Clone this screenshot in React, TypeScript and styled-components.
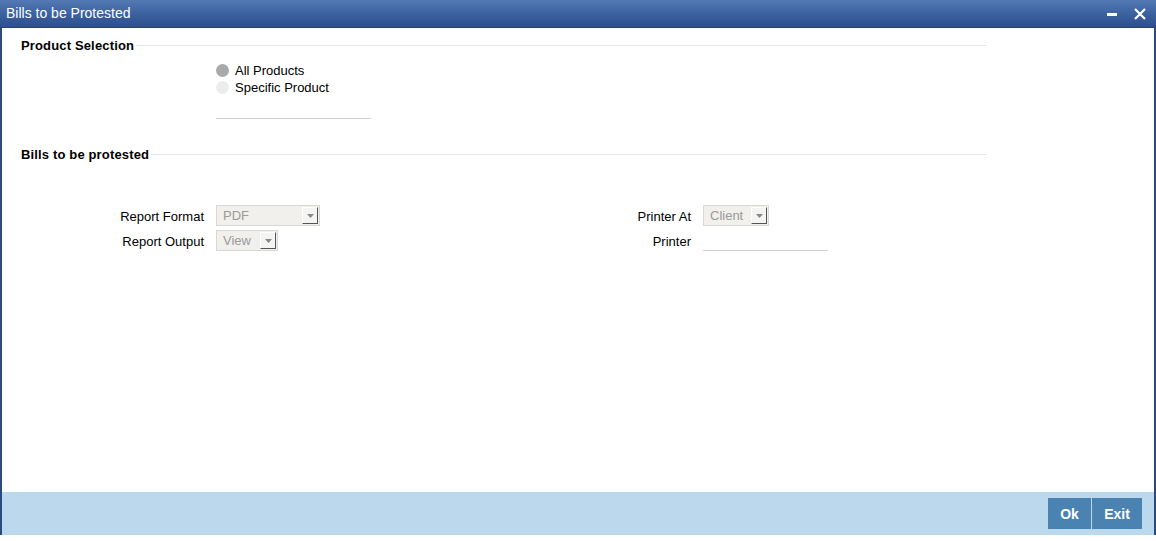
import React from "react";
import styled, { createGlobalStyle } from "styled-components";

const Global = createGlobalStyle`
  html, body { margin: 0; padding: 0; background: #fff; }
  body { font-family: "Liberation Sans", Arial, sans-serif; font-size: 13px; color: #000; }
  * { box-sizing: border-box; }
`;

const Window = styled.div`
  width: 1156px;
  height: 535px;
  display: flex;
  flex-direction: column;
  background: #fff;
`;

const TitleBar = styled.div`
  height: 28px;
  flex: none;
  display: flex;
  align-items: center;
  justify-content: space-between;
  padding: 0 10px 0 6px;
  background: linear-gradient(to bottom, #5479b3 0%, #3c62a0 50%, #2d4f8d 100%);
  border-bottom: 1px solid #25447c;
  color: #fff;
  font-size: 14px;
`;

const TitleText = styled.span`
  line-height: 28px;
  margin-top: -2px;
`;

const TitleButtons = styled.div`
  display: flex;
  align-items: center;
  gap: 16px;
`;

const IconButton = styled.span`
  width: 12px;
  height: 12px;
  display: flex;
  align-items: center;
  justify-content: center;
`;

const Body = styled.div`
  flex: 1;
  display: flex;
  flex-direction: column;
  border-left: 2px solid #2b4a80;
  border-right: 2px solid #2b4a80;
  padding: 9px 0 0 19px;
`;

const SectionHeader = styled.div<{ $mt?: number }>`
  display: flex;
  align-items: center;
  width: 966px;
  height: 16px;
  margin-top: ${(p) => p.$mt ?? 0}px;
  font-weight: bold;
  font-size: 13px;
  letter-spacing: 0.15px;
`;

const HeaderLine = styled.div`
  flex: 1;
  height: 0;
  border-top: 1px solid #e6e6e6;
  margin-left: 2px;
`;

const RadioGroup = styled.div`
  display: flex;
  flex-direction: column;
  margin: 9px 0 0 195px;
`;

const RadioRow = styled.label`
  display: flex;
  align-items: center;
  height: 17px;
  gap: 6px;
  font-size: 13px;
`;

const RadioDot = styled.span<{ $checked?: boolean }>`
  width: 13px;
  height: 13px;
  border-radius: 50%;
  background: ${(p) => (p.$checked ? "#a9a9a9" : "#ececec")};
`;

const Underline = styled.div<{ $w: number; $ml?: number; $mt?: number }>`
  width: ${(p) => p.$w}px;
  height: 0;
  border-top: 1px solid #cfcfcf;
  margin-left: ${(p) => p.$ml ?? 0}px;
  margin-top: ${(p) => p.$mt ?? 0}px;
`;

const FormGrid = styled.div`
  display: grid;
  grid-template-columns: 487px 487px;
  margin-top: 43px;
  row-gap: 4px;
`;

const Field = styled.div`
  display: grid;
  grid-template-columns: 183px auto;
  column-gap: 12px;
  align-items: center;
  height: 21px;
  justify-items: start;
`;

const Label = styled.span`
  justify-self: end;
  font-size: 13px;
  padding-top: 1px;
`;

const Select = styled.div<{ $w: number }>`
  width: ${(p) => p.$w}px;
  height: 21px;
  display: flex;
  align-items: center;
  justify-content: space-between;
  background: #f1f0ec;
  border: 1px solid #d8d8d4;
  color: #9a9a9a;
  font-size: 13px;
  padding: 0 1px 0 6px;
`;

const Arrow = styled.span`
  width: 16px;
  height: 17px;
  display: flex;
  align-items: center;
  justify-content: center;
  background: #f4f4f2;
  border-top: 1px solid #fff;
  border-left: 1px solid #fff;
  border-right: 1px solid #555;
  border-bottom: 1px solid #555;
`;

const LineInput = styled.div`
  width: 125px;
  height: 21px;
  border-bottom: 1px solid #cfcfcf;
`;

const Footer = styled.div`
  height: 43px;
  flex: none;
  display: flex;
  align-items: center;
  justify-content: flex-end;
  gap: 1px;
  padding-right: 12px;
  background: #bcd8ed;
  border-left: 2px solid #2b4a80;
  border-right: 2px solid #2b4a80;
`;

const Button = styled.button<{ $w: number }>`
  width: ${(p) => p.$w}px;
  height: 31px;
  border: none;
  background: #4a83b2;
  color: #fff;
  font-family: "Liberation Sans", Arial, sans-serif;
  font-weight: bold;
  font-size: 14px;
  padding: 0;
  cursor: pointer;
`;

const ArrowIcon = () => (
  <svg width="7" height="4" viewBox="0 0 7 4">
    <path d="M0 0h7L3.5 4z" fill="#888" />
  </svg>
);

export default function App() {
  return (
    <>
      <Global />
      <Window>
        <TitleBar>
          <TitleText>Bills to be Protested</TitleText>
          <TitleButtons>
            <IconButton>
              <svg width="11" height="12" viewBox="0 0 11 12">
                <rect x="0" y="5" width="10" height="3" fill="#fff" />
              </svg>
            </IconButton>
            <IconButton>
              <svg width="12" height="12" viewBox="0 0 12 12">
                <path d="M1 1L11 11M11 1L1 11" stroke="#fff" strokeWidth="2.2" />
              </svg>
            </IconButton>
          </TitleButtons>
        </TitleBar>
        <Body>
          <SectionHeader>
            <span>Product Selection</span>
            <HeaderLine />
          </SectionHeader>
          <RadioGroup>
            <RadioRow>
              <RadioDot $checked />
              All Products
            </RadioRow>
            <RadioRow>
              <RadioDot />
              Specific Product
            </RadioRow>
          </RadioGroup>
          <Underline $w={155} $ml={195} $mt={22} />
          <SectionHeader $mt={27}>
            <span>Bills to be protested</span>
            <HeaderLine />
          </SectionHeader>
          <FormGrid>
            <Field>
              <Label>Report Format</Label>
              <Select $w={104}>
                PDF
                <Arrow>
                  <ArrowIcon />
                </Arrow>
              </Select>
            </Field>
            <Field>
              <Label>Printer At</Label>
              <Select $w={66}>
                Client
                <Arrow>
                  <ArrowIcon />
                </Arrow>
              </Select>
            </Field>
            <Field>
              <Label>Report Output</Label>
              <Select $w={62}>
                View
                <Arrow>
                  <ArrowIcon />
                </Arrow>
              </Select>
            </Field>
            <Field>
              <Label>Printer</Label>
              <LineInput />
            </Field>
          </FormGrid>
        </Body>
        <Footer>
          <Button $w={43}>Ok</Button>
          <Button $w={50}>Exit</Button>
        </Footer>
      </Window>
    </>
  );
}
